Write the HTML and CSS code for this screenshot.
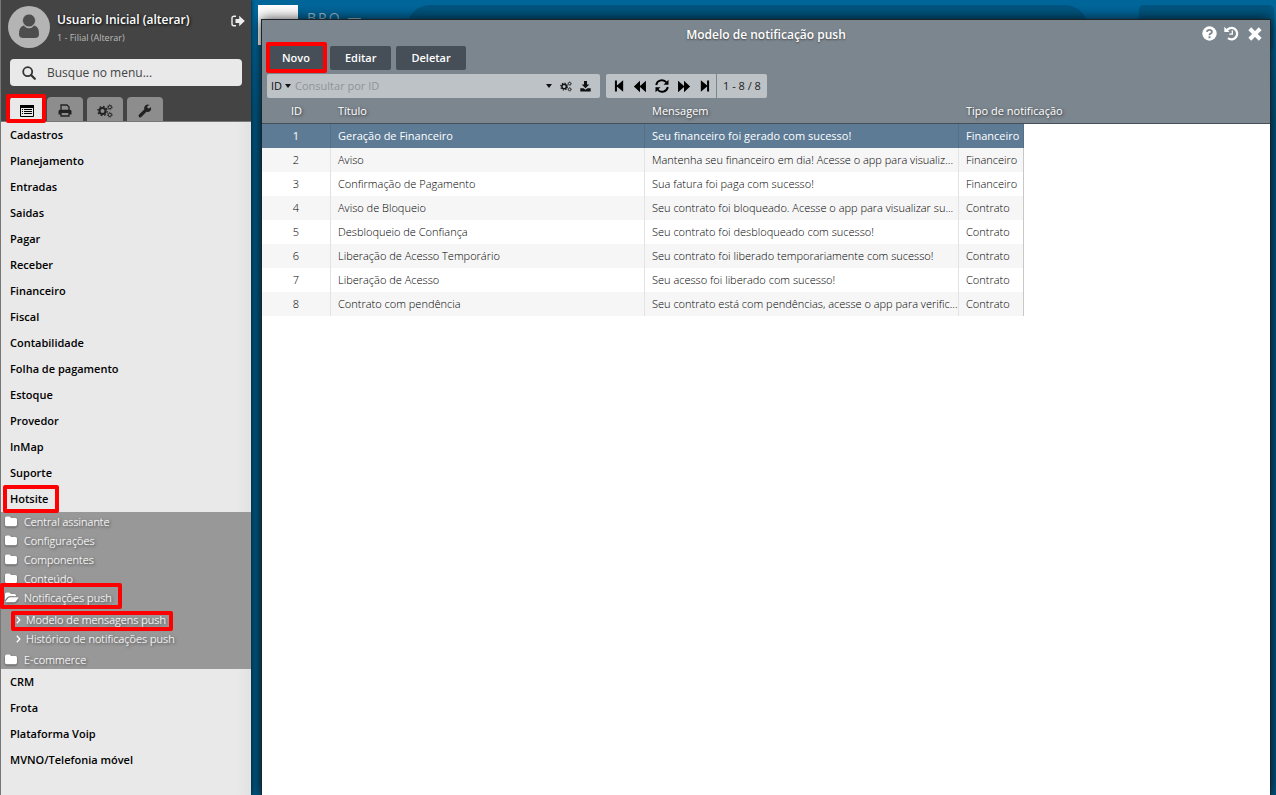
FILE: index.html
```html
<!DOCTYPE html>
<html lang="pt-BR">
<head>
<meta charset="utf-8">
<title>Modelo de notificação push</title>
<link rel="stylesheet" href="styles.css">
</head>
<body>
<svg class="sprite" aria-hidden="true">
  <symbol id="i-cogs" viewBox="0 0 16 14">
    <circle cx="5.5" cy="7" r="3" fill="none" stroke="currentColor" stroke-width="2"/>
    <circle cx="5.5" cy="7" r="4.6" fill="none" stroke="currentColor" stroke-width="1.4" stroke-dasharray="1.7 1.91"/>
    <circle cx="12.8" cy="3.2" r="1.6" fill="none" stroke="currentColor" stroke-width="1"/>
    <circle cx="12.8" cy="3.2" r="2.4" fill="none" stroke="currentColor" stroke-width=".8" stroke-dasharray="1 .88"/>
    <circle cx="12.8" cy="10.8" r="1.6" fill="none" stroke="currentColor" stroke-width="1"/>
    <circle cx="12.8" cy="10.8" r="2.4" fill="none" stroke="currentColor" stroke-width=".8" stroke-dasharray="1 .88"/>
  </symbol>
  <symbol id="i-folder" viewBox="0 0 12 11">
    <path fill="currentColor" d="M0 2a1.6 1.6 0 0 1 1.6-1.6h2.6A1.6 1.6 0 0 1 5.8 2h4.6A1.6 1.6 0 0 1 12 3.6v5A1.6 1.6 0 0 1 10.400 10.200H1.600A1.600 1.600 0 0 1 0 8.600z"/>
  </symbol>
  <symbol id="i-open" viewBox="0 0 14 11">
    <path fill="currentColor" d="M0 8V2A1.600 1.600 0 0 1 1.600.400h2.400A1.600 1.600 0 0 1 5.600 2h3.800A1.600 1.600 0 0 1 11 3.600V4.200H5Q3.500 4.200 2.500 5.300zM4.800 5.200H12.800Q14 5.300 13.300 6.200L10.800 9.400Q10.200 10.200 9 10.200H1.200Q0 10.100.700 9.200L3.200 6Q3.800 5.200 4.800 5.200z"/>
  </symbol>
  <symbol id="i-skip" viewBox="0 0 12 14">
    <path fill="currentColor" d="M1 1h2.200v5.500L10 .6v12.800L3.200 7.500V13H1z"/>
  </symbol>
  <symbol id="i-double" viewBox="0 0 14 14">
    <path fill="currentColor" d="M.4 7 7 .8v5.600L13.400.800v12.400L7 7.600v5.600z"/>
  </symbol>
</svg>

<div class="app">
  <aside class="sidebar">
    <header class="profile">
      <svg class="avatar" viewBox="0 0 42 42" aria-hidden="true">
        <circle cx="21" cy="21" r="21" fill="#b4b4b4"/>
        <path fill="#4d4d4d" d="M15.500 19.500Q21 25 26.500 19.500Q31.500 21 31 29Q30.500 32 27 32H15Q11.500 32 11 29Q10.500 21 15.500 19.500z"/>
        <circle cx="21" cy="14.500" r="6.500" fill="#4d4d4d" stroke="#b4b4b4" stroke-width=".8"/>
      </svg>
      <div class="who">
        <strong class="user">Usuario Inicial (alterar)</strong>
        <span class="branch">1 - Filial (Alterar)</span>
      </div>
      <button class="exit" aria-label="Sair">
        <svg width="14" height="12" viewBox="0 0 14 12"><path fill="none" stroke="currentColor" stroke-width="1.400" d="M5 1.200H3Q1 1.200 1 3v6q0 1.800 2 1.800h2"/><path fill="currentColor" d="M4.500 4h3.700V.800L13.800 6l-5.600 5.200V8H4.500z"/></svg>
      </button>
    </header>

    <label class="menu-search">
      <svg width="14" height="14" viewBox="0 0 14 14" aria-hidden="true"><circle cx="5.700" cy="5.700" r="4.500" fill="none" stroke="currentColor" stroke-width="1.800"/><path d="m9 9 3.800 3.800" stroke="currentColor" stroke-width="2.200" stroke-linecap="round"/></svg>
      <input type="text" placeholder="Busque no menu..." aria-label="Busque no menu">
    </label>

    <div class="tabs">
      <button class="tab tab-on mark mark-tab" aria-label="Menu">
        <svg width="14" height="12" viewBox="0 0 14 12"><path d="M.500.500h13v11H.500z" fill="none" stroke="currentColor"/><path d="M0 0h14v3H0z" fill="currentColor"/><path d="M2 4.500h1M4 4.500h8M2 6.500h1M4 6.500h8M2 8.500h1M4 8.500h8" stroke="currentColor"/></svg>
      </button>
      <button class="tab" aria-label="Relatórios">
        <svg width="14" height="13" viewBox="0 0 14 13"><path fill="none" stroke="currentColor" stroke-width="1.300" d="M3 6.500V1h6l2 2v3.500M3 9v3h8V9"/><path fill="currentColor" d="M2 5.800h10q1.500 0 1.500 1.500v3.200H11V9H3v1.500H.500V7.300Q.500 5.800 2 5.800z"/></svg>
      </button>
      <button class="tab" aria-label="Configurações"><svg width="16" height="14"><use href="#i-cogs"/></svg></button>
      <button class="tab" aria-label="Ferramentas">
        <svg width="14" height="14" viewBox="0 0 14 14"><path fill="currentColor" d="M13 3.200 10.800 4.600 9.300 3.800V2.200L11.500.900Q9.500 0 7.500 1.200 5.500 3 6.200 5.500L.900 10.700Q.100 11.700 1 12.900q1.200 1 2.300.100L8.500 7.800Q10.500 8.300 12.300 7 13.700 5.500 13 3.200z"/></svg>
      </button>
    </div>

    <nav class="menu">
      <a class="item" href="#">Cadastros</a>
      <a class="item" href="#">Planejamento</a>
      <a class="item" href="#">Entradas</a>
      <a class="item" href="#">Saidas</a>
      <a class="item" href="#">Pagar</a>
      <a class="item" href="#">Receber</a>
      <a class="item" href="#">Financeiro</a>
      <a class="item" href="#">Fiscal</a>
      <a class="item" href="#">Contabilidade</a>
      <a class="item" href="#">Folha de pagamento</a>
      <a class="item" href="#">Estoque</a>
      <a class="item" href="#">Provedor</a>
      <a class="item" href="#">InMap</a>
      <a class="item" href="#">Suporte</a>
      <a class="item mark mark-item" href="#">Hotsite</a>
      <div class="submenu">
        <a class="folder" href="#"><svg width="12" height="11"><use href="#i-folder"/></svg>Central assinante</a>
        <a class="folder" href="#"><svg width="12" height="11"><use href="#i-folder"/></svg>Configurações</a>
        <a class="folder" href="#"><svg width="12" height="11"><use href="#i-folder"/></svg>Componentes</a>
        <a class="folder" href="#"><svg width="12" height="11"><use href="#i-folder"/></svg>Conteúdo</a>
        <a class="folder mark mark-folder" href="#"><svg width="14" height="11"><use href="#i-open"/></svg>Notificações push</a>
        <div class="leaves">
          <a class="leaf mark mark-leaf" href="#"><svg width="5" height="8" viewBox="0 0 5 8"><path d="m.800.800 3 3.200-3 3.200" fill="none" stroke="currentColor" stroke-width="1.300"/></svg>Modelo de mensagens push</a>
          <a class="leaf" href="#"><svg width="5" height="8" viewBox="0 0 5 8"><path d="m.800.800 3 3.200-3 3.200" fill="none" stroke="currentColor" stroke-width="1.300"/></svg>Histórico de notificações push</a>
        </div>
        <a class="folder" href="#"><svg width="12" height="11"><use href="#i-folder"/></svg>E-commerce</a>
      </div>
      <a class="item" href="#">CRM</a>
      <a class="item" href="#">Frota</a>
      <a class="item" href="#">Plataforma Voip</a>
      <a class="item" href="#">MVNO/Telefonia móvel</a>
    </nav>
  </aside>

  <main class="desktop">
    <div class="backdrop" aria-hidden="true">
      <div class="logo"></div>
      <div class="brand">BRO —</div>
      <div class="pill"></div>
      <div class="card"></div>
    </div>
    <section class="window">
      <header class="head">
        <div class="titlebar">
          <h1 class="title">Modelo de notificação push</h1>
          <div class="win-actions">
            <button aria-label="Ajuda"><svg width="15" height="15" viewBox="0 0 15 15"><circle cx="7.500" cy="7.500" r="7.200" fill="currentColor"/><path d="M5 5.800Q5.300 3.900 7.500 3.900T9.900 5.900Q9.900 7 8.500 7.600 7.500 8 7.500 9.300M7.500 10.300v2" fill="none" stroke="#7c868f" stroke-width="1.900"/></svg></button>
            <button aria-label="Histórico"><svg width="15" height="15" viewBox="0 0 15 15"><path d="M2.500 4.800A5.700 5.700 0 1 1 4 12.200" fill="none" stroke="currentColor" stroke-width="2.300"/><path d="M.300.800V6h5.200z" fill="currentColor"/><path d="M8.300 4.500v3.700H5.300" fill="none" stroke="currentColor" stroke-width="1.300"/></svg></button>
            <button class="close" aria-label="Fechar"><svg width="14" height="14" viewBox="0 0 14 14"><path d="m3.200 3.200 7.600 7.600m0-7.600-7.600 7.600" stroke="currentColor" stroke-width="4" stroke-linecap="square"/></svg></button>
          </div>
        </div>
        <div class="actions">
          <button class="btn mark mark-btn">Novo</button>
          <button class="btn">Editar</button>
          <button class="btn">Deletar</button>
        </div>
        <div class="tools">
          <div class="query">
            <button class="field">ID<span class="caret"></span></button>
            <input class="term" type="text" placeholder="Consultar por ID" aria-label="Consultar por ID">
            <button aria-label="Opções"><span class="caret"></span></button>
            <button aria-label="Configurar"><svg width="12" height="11"><use href="#i-cogs"/></svg></button>
            <button aria-label="Exportar"><svg width="11" height="11" viewBox="0 0 11 11"><path fill="currentColor" d="M4 0h3v3.500h2.300L5.500 7.300 1.700 3.500H4zM.300 7.200h3.200l2 1.500 2-1.500h3.200v3.400H.300z"/></svg></button>
          </div>
          <div class="pager">
            <button aria-label="Primeiro"><svg width="11" height="14" viewBox="0 0 12 14"><use href="#i-skip"/></svg></button>
            <button aria-label="Anterior"><svg width="14" height="13" viewBox="0 0 14 14"><use href="#i-double"/></svg></button>
            <button aria-label="Atualizar"><svg width="14" height="14" viewBox="0 0 14 14"><path d="M1.200 6A5.800 5.800 0 0 1 11.500 3.500M12.800 8A5.800 5.800 0 0 1 2.500 10.500" fill="none" stroke="currentColor" stroke-width="1.900"/><path fill="currentColor" d="M13.500.800v5H8.500zM.500 13.200v-5h5z"/></svg></button>
            <button aria-label="Próximo"><svg class="flip" width="14" height="13" viewBox="0 0 14 14"><use href="#i-double"/></svg></button>
            <button aria-label="Último"><svg class="flip" width="11" height="14" viewBox="0 0 12 14"><use href="#i-skip"/></svg></button>
            <span class="count">1 - 8 / 8</span>
          </div>
        </div>
      </header>
      <table class="grid">
        <colgroup><col class="c-id"><col class="c-text"><col class="c-text"><col class="c-type"><col></colgroup>
        <thead>
          <tr><th>ID</th><th>Título</th><th>Mensagem</th><th colspan="2">Tipo de notificação</th></tr>
        </thead>
        <tbody>
          <tr class="selected"><td>1</td><td>Geração de Financeiro</td><td>Seu financeiro foi gerado com sucesso!</td><td>Financeiro</td></tr>
          <tr><td>2</td><td>Aviso</td><td>Mantenha seu financeiro em dia! Acesse o app para visualiz...</td><td>Financeiro</td></tr>
          <tr><td>3</td><td>Confirmação de Pagamento</td><td>Sua fatura foi paga com sucesso!</td><td>Financeiro</td></tr>
          <tr><td>4</td><td>Aviso de Bloqueio</td><td>Seu contrato foi bloqueado. Acesse o app para visualizar su...</td><td>Contrato</td></tr>
          <tr><td>5</td><td>Desbloqueio de Confiança</td><td>Seu contrato foi desbloqueado com sucesso!</td><td>Contrato</td></tr>
          <tr><td>6</td><td>Liberação de Acesso Temporário</td><td>Seu contrato foi liberado temporariamente com sucesso!</td><td>Contrato</td></tr>
          <tr><td>7</td><td>Liberação de Acesso</td><td>Seu acesso foi liberado com sucesso!</td><td>Contrato</td></tr>
          <tr><td>8</td><td>Contrato com pendência</td><td>Seu contrato está com pendências, acesse o app para verific...</td><td>Contrato</td></tr>
        </tbody>
      </table>
    </section>
  </main>
</div>
</body>
</html>
```
FILE: styles.css
```css
*, ::before, ::after { box-sizing: border-box; }
body {
  margin: 0;
  font: 11px/16px "Open Sans", "Noto Sans", sans-serif;
  color: #000;
}
button {
  display: inline-flex;
  align-items: center;
  justify-content: center;
  padding: 0;
  border: 0;
  background: none;
  color: inherit;
  font: inherit;
}
input {
  min-width: 0;
  padding: 0;
  border: 0;
  outline: 0;
  background: none;
  font: inherit;
}
a { color: inherit; text-decoration: none; }
.sprite { position: absolute; width: 0; height: 0; }

.app { display: flex; min-height: 100vh; background: #00669a; }

/* red highlight frames */
.mark { position: relative; }
.mark::after {
  content: "";
  position: absolute;
  z-index: 2;
  border: 4px solid #f00;
  border-radius: 2px;
  pointer-events: none;
}
.mark-tab::after { inset: -3px -3px -2px -4px; }
.mark-item::after { inset: -1px auto -1px 2px; width: 56px; }
.mark-folder::after { inset: -5px auto -2px -1px; width: 122px; }
.mark-leaf::after { inset: 1px auto -2px 10px; width: 162px; }
.mark-btn::after { inset: -4px -2px -3px -1px; }

/* sidebar */
.sidebar {
  position: relative;
  z-index: 1;
  flex: 0 0 251px;
  display: flex;
  flex-direction: column;
  border-left: 1px solid #777;
  background: #444;
  box-shadow: 1px 0 3px rgba(0, 0, 0, .5);
}
.profile { display: flex; align-items: flex-start; gap: 7px; padding: 6px 6px 0 7px; }
.avatar { flex: none; width: 42px; height: 42px; }
.who { flex: 1; display: flex; flex-direction: column; padding-top: 5px; }
.user { color: #fff; font-size: 12px; font-weight: 600; line-height: 18px; text-shadow: 1px 1px 3px #000; white-space: nowrap; }
.branch { color: #bbb; font-size: 9px; line-height: 18px; }
.exit { padding-top: 9px; color: #eee; }
.menu-search {
  display: flex;
  align-items: center;
  gap: 11px;
  height: 27px;
  margin: 11px 9px 0;
  padding: 0 12px;
  border-radius: 4px;
  background: #e9e9e9;
  color: #333;
}
.menu-search input { flex: 1; font-size: 12px; }
.menu-search input::placeholder { color: #444; }
.tabs { display: flex; gap: 4px; padding: 11px 9px 0; border-bottom: 1px solid #777; }
.tab { width: 36px; height: 24px; padding-top: 3px; border-radius: 4px 4px 0 0; background: #8d8d8d; color: #222; }
.tab-on { width: 33px; background: #e9e9e9; color: #000; }
.menu { flex: 1; background: linear-gradient(to right, #e9e9e9 94%, #e2e2e2); }
.item { display: block; padding: 5px 9px; font-weight: 600; }
.submenu { background: #989898; color: #fff; font-weight: 300; text-shadow: 1px 1px 3px #222, 0 0 1px #fff; }
.folder { display: flex; align-items: center; height: 19px; padding-left: 4px; }
.folder svg { flex: none; margin-right: 7px; filter: drop-shadow(0 1px 1px #555); }
.folder svg[width="14"] { margin-right: 5px; }
.leaves { padding: 3px 0 2px; }
.leaf { display: flex; align-items: center; gap: 5px; height: 19px; padding-left: 15px; }

/* desktop */
.desktop { position: relative; flex: 1; min-width: 0; display: flex; overflow: hidden; padding: 19px 5px 0 10px; background: linear-gradient(#00669a, #00669a 20px, #005580 120px); }
.backdrop { position: absolute; inset: 0; color: #9dbdcb; }
.logo { position: absolute; left: 7px; top: 5px; width: 40px; height: 40px; background: #fff; }
.brand { position: absolute; left: 56px; top: 10px; font-size: 14px; letter-spacing: 2px; }
.pill { position: absolute; left: 156px; right: 188px; top: 5px; height: 46px; border-radius: 23px; background: #005580; }
.card { position: absolute; right: 2px; top: 5px; width: 135px; height: 46px; border-radius: 5px; background: #005580; }

.window { position: relative; flex: 1; min-width: 0; border: 1px solid #1d2329; border-bottom: 0; background: #fff; box-shadow: 0 0 12px rgba(0, 0, 0, .8); }
.head { background: #7c868f; padding: 0 5px 1px; color: #fff; }
.titlebar { display: flex; align-items: center; justify-content: center; position: relative; height: 26px; padding-top: 3px; }
.title { margin: 0; font-size: 12px; line-height: 18px; font-weight: 600; text-shadow: 0 1px 2px #444; }
.win-actions { position: absolute; right: 3px; top: 6px; display: flex; gap: 7px; }
.close { margin-left: 2px; }
.actions { display: flex; gap: 5px; }
.btn { height: 24px; padding: 0 15px; border-radius: 2px; background: #464f58; color: #fff; font-weight: 600; }
.tools { display: flex; gap: 6px; margin-top: 4px; color: #111; }
.query, .pager { display: flex; align-items: center; height: 24px; border-radius: 2px; background: #bdc2c6; }
.query { flex: 0 0 333px; gap: 8px; padding: 0 9px 0 4px; }
.query .field { gap: 3px; font-weight: 500; }
.term { flex: 1; margin-left: -4px; }
.term::placeholder { color: #909498; }
.caret { border: 3px solid transparent; border-top: 4px solid #111; border-bottom: 0; }
.pager { gap: 8px; padding-left: 8px; color: #000; }
.pager .count { align-self: stretch; margin-left: -2px; padding: 0 6px; border-left: 1px solid #7c868f; line-height: 24px; color: #222; }
.flip { transform: scaleX(-1); }

/* table */
.grid { width: 100%; table-layout: fixed; border-collapse: separate; border-spacing: 0; }
.c-id { width: 69px; }
.c-text { width: 314px; }
.c-type { width: 65px; }
.grid th, .grid td { height: 24px; padding: 0 7px; text-align: left; white-space: nowrap; font-weight: 300; }
.grid th { height: 25px; border-bottom: 1px solid #464f58; background: #7c868f; color: #fff; font-weight: 400; text-shadow: 1px 1px 3px #333; }
.grid th:first-child, .grid td:first-child { text-align: center; }
.grid td { border-right: 1px solid #e3e3e3; }
.grid td:last-child { border-color: #c8c8c8; }
.grid tr:nth-child(even) td { background: #f6f6f6; }
.grid .selected td { background: #5d7b95; border-color: #547089; color: #fff; font-weight: 400; }
```
